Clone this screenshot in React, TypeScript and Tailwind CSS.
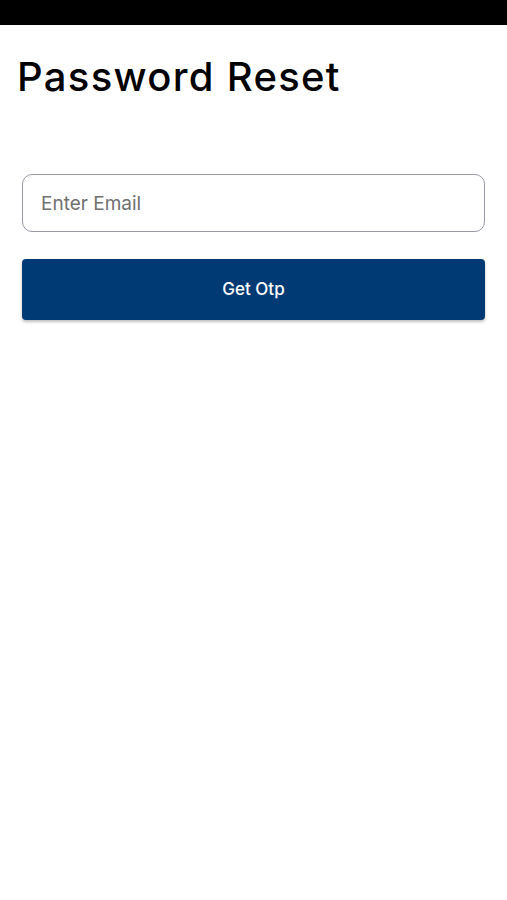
import React, { useState } from 'react';

export default function App() {
  const [email, setEmail] = useState('');

  return (
    <div className="min-h-[900px] w-full bg-white" style={{ fontFamily: 'Inter, "Liberation Sans", sans-serif' }}>
      {/* status bar */}
      <div className="h-[25px] w-full bg-black" />

      <div className="px-[22px]">
        <h1 className="-ml-[5px] mt-[30px] text-[40px] font-medium leading-[44px] tracking-[1.3px] text-black">
          Password Reset
        </h1>

        <form
          onSubmit={(e) => e.preventDefault()}
          className="mt-[75px] flex flex-col gap-[27px]"
        >
          <input
            type="email"
            value={email}
            onChange={(e) => setEmail(e.target.value)}
            placeholder="Enter Email"
            className="h-[58px] w-full rounded-[10px] border border-[#9a9aa6] bg-white px-[18px] text-[19px] text-black placeholder-[#707070] focus:outline-none"
          />
          <button
            type="submit"
            className="h-[61px] w-full rounded-[4px] bg-[#003a74] text-[17px] font-medium text-white shadow-[0_2px_3px_rgba(0,0,0,0.25)]"
          >
            Get Otp
          </button>
        </form>
      </div>
    </div>
  );
}
